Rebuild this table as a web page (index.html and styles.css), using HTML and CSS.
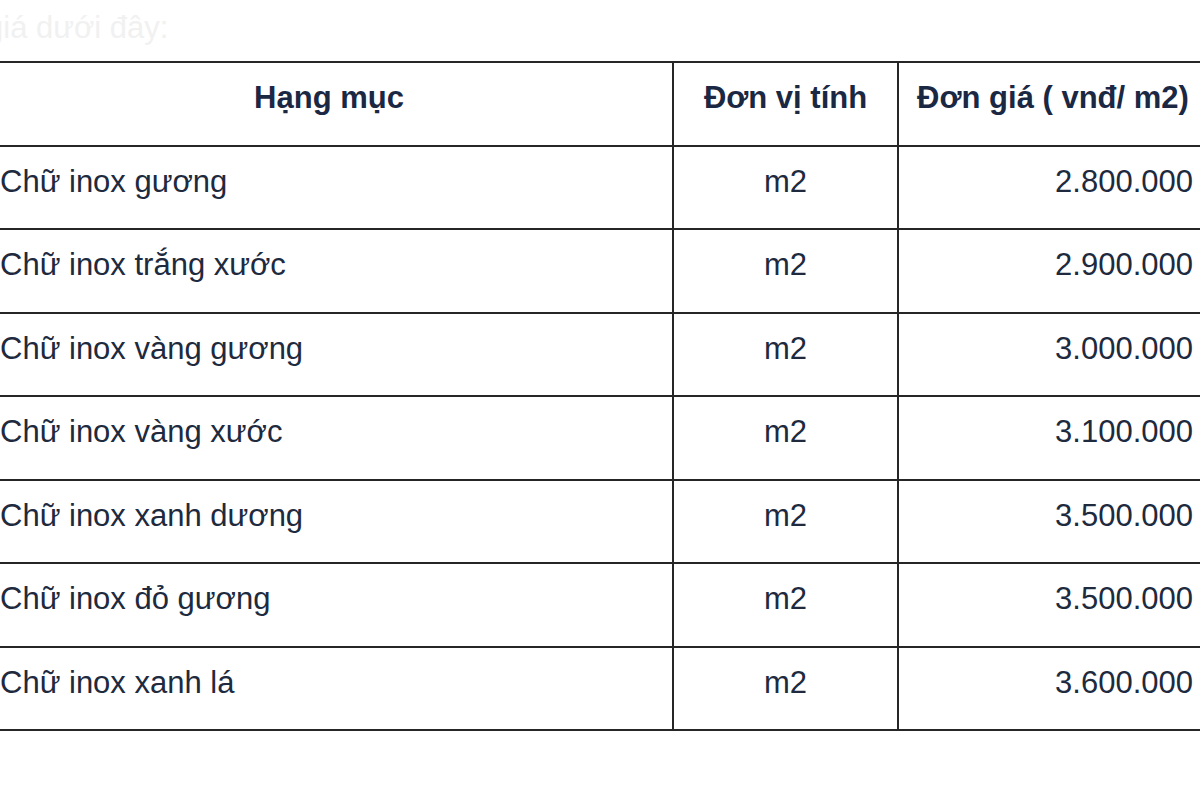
FILE: index.html
```html
<!DOCTYPE html>
<html lang="vi">
<head>
<meta charset="utf-8">
<link rel="stylesheet" href="styles.css">
</head>
<body>
<div class="page">
  <p class="intro">giá dưới đây:</p>
  <table class="price">
    <thead>
      <tr><th class="c1">Hạng mục</th><th class="c2">Đơn vị tính</th><th class="c3">Đơn giá ( vnđ/ m2)</th></tr>
    </thead>
    <tbody>
      <tr><td class="c1">Chữ inox gương</td><td class="c2">m2</td><td class="c3">2.800.000</td></tr>
      <tr><td class="c1">Chữ inox trắng xước</td><td class="c2">m2</td><td class="c3">2.900.000</td></tr>
      <tr><td class="c1">Chữ inox vàng gương</td><td class="c2">m2</td><td class="c3">3.000.000</td></tr>
      <tr><td class="c1">Chữ inox vàng xước</td><td class="c2">m2</td><td class="c3">3.100.000</td></tr>
      <tr><td class="c1">Chữ inox xanh dương</td><td class="c2">m2</td><td class="c3">3.500.000</td></tr>
      <tr><td class="c1">Chữ inox đỏ gương</td><td class="c2">m2</td><td class="c3">3.500.000</td></tr>
      <tr><td class="c1">Chữ inox xanh lá</td><td class="c2">m2</td><td class="c3">3.600.000</td></tr>
    </tbody>
  </table>
</div>
</body>
</html>
```
FILE: styles.css
```css
html, body {
  margin: 0;
  padding: 0;
  background: #ffffff;
  overflow: hidden;
}
body {
  font-family: "Liberation Sans", Arial, sans-serif;
  color: #1e2638;
}
.page {
  width: 1200px;
  height: 800px;
  overflow: hidden;
}
.intro {
  margin: 0 0 0 -14px;
  height: 61px;
  line-height: 56px;
  font-size: 31px;
  color: #f1f1f1;
  white-space: nowrap;
}
.price {
  border-collapse: collapse;
  margin-left: -14px;
  width: 1220px;
  table-layout: fixed;
  font-size: 31px;
}
.price th, .price td {
  border-top: 2px solid #262626;
  border-bottom: 2px solid #262626;
  height: 81.5px;
  padding: 0 14px 11px;
  box-sizing: border-box;
}
.price tr {
  height: 83.5px;
}
.price .c1 { width: 687px; text-align: left; }
.price .c2 { width: 225px; text-align: center; border-left: 2px solid #262626; border-right: 2px solid #262626; }
.price .c3 { text-align: right; padding-right: 13px; }
.price th {
  font-weight: bold;
  color: #1b2844;
}
.price th.c1, .price th.c2, .price th.c3 { text-align: center; }
.price td { color: #202a3e; }
```
